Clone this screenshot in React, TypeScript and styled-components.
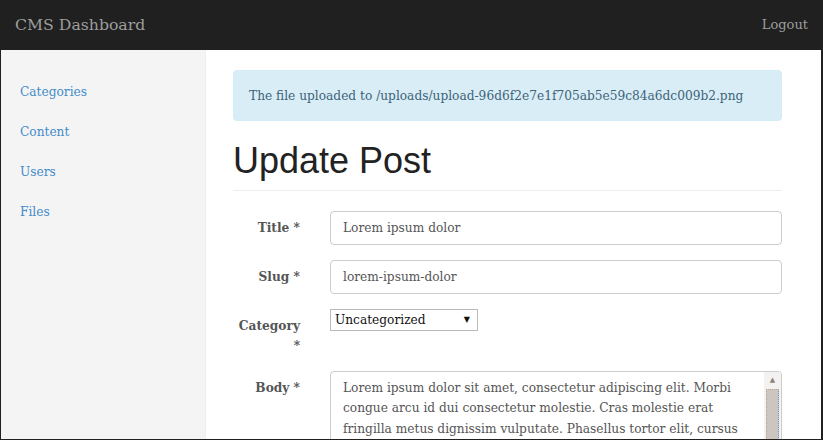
import styled, { createGlobalStyle } from 'styled-components';

const serif = `"DejaVu Serif", Georgia, serif`;

const GlobalStyle = createGlobalStyle`
  html, body {
    margin: 0;
    padding: 0;
    background: #fff;
  }
  * {
    box-sizing: border-box;
  }
`;

const BODY_TEXT =
  'Lorem ipsum dolor sit amet, consectetur adipiscing elit. Morbi\n' +
  'congue arcu id dui consectetur molestie. Cras molestie erat\n' +
  'fringilla metus dignissim vulputate. Phasellus tortor elit, cursus\n' +
  'sed lacinia non, pretium nec nunc. Sed a sem non ante ultrices\n' +
  'posuere. Nullam vitae tortor ac sapien congue tincidunt. Donec\n' +
  'eget metus quis erat fringilla placerat. Curabitur vitae mauris\n' +
  'ut est porta sodales. Vivamus feugiat ante sit amet velit.\n' +
  'Aliquam erat volutpat. Integer non est vitae nunc aliquet.';

const sideLinks = ['Categories', 'Content', 'Users', 'Files'];

function App() {
  return (
    <>
      <GlobalStyle />
      <Frame>
        <Navbar>
          <Brand href="#">CMS Dashboard</Brand>
          <NavLink href="#">Logout</NavLink>
        </Navbar>
        <Layout>
          <Sidebar>
            {sideLinks.map((l) => (
              <SideLink key={l} href="#">
                {l}
              </SideLink>
            ))}
          </Sidebar>
          <Main>
            <Alert>The file uploaded to /uploads/upload-96d6f2e7e1f705ab5e59c84a6dc009b2.png</Alert>
            <PageHeader>Update Post</PageHeader>
            <Form>
              <Label>Title *</Label>
              <Input defaultValue="Lorem ipsum dolor" />
              <Label>Slug *</Label>
              <Input defaultValue="lorem-ipsum-dolor" />
              <Label>Category *</Label>
              <SelectWrap>
                <Select defaultValue="0">
                  <option value="0">Uncategorized</option>
                </Select>
              </SelectWrap>
              <Label>Body *</Label>
              <TextAreaWrap>
                <TextArea defaultValue={BODY_TEXT} />
                <ScrollBar>
                  <ScrollArrow>▲</ScrollArrow>
                  <ScrollThumb />
                </ScrollBar>
              </TextAreaWrap>
            </Form>
          </Main>
        </Layout>
      </Frame>
    </>
  );
}

const Frame = styled.div`
  width: 823px;
  height: 440px;
  overflow: hidden;
  display: flex;
  flex-direction: column;
  border-left: 1px solid #202020;
  border-right: 2px solid #202020;
  border-bottom: 1px solid #202020;
  font-family: ${serif};
  font-size: 12.2px;
  line-height: 20px;
  color: #555;
`;
const Navbar = styled.header`
  height: 50px;
  flex: none;
  margin: 0 -2px 0 -1px;
  background: #202020;
  display: flex;
  align-items: center;
  justify-content: space-between;
  padding: 0 15px 0 15px;
`;
const Brand = styled.a`
  color: #9d9d9d;
  font-size: 15.7px;
  text-decoration: none;
`;
const NavLink = styled(Brand)`
  font-size: 13px;
`;
const Layout = styled.div`
  flex: 1;
  display: flex;
  min-height: 0;
`;
const Sidebar = styled.nav`
  width: 205px;
  flex: none;
  background: #f4f4f4;
  border-right: 1px solid #eee;
  padding: 32px 0 0 19px;
  display: flex;
  flex-direction: column;
  gap: 20px;
`;
const SideLink = styled.a`
  color: #428bca;
  text-decoration: none;
  line-height: 20px;
`;
const Main = styled.main`
  flex: 1;
  min-width: 0;
  padding: 20px 39px 0 27px;
`;
const Alert = styled.div`
  height: 51px;
  padding: 15px;
  border: 1px solid #d3ecf6;
  border-radius: 4px;
  background: #d9edf7;
  color: #3d6478;
  white-space: nowrap;
  margin-bottom: 20px;
`;
const PageHeader = styled.h1`
  margin: 0 0 20px;
  padding-bottom: 9px;
  border-bottom: 1px solid #eee;
  font-family: "Liberation Sans", Arial, sans-serif;
  font-weight: 400;
  font-size: 36px;
  line-height: 39.6px;
  color: #222;
`;
const Form = styled.form`
  display: grid;
  grid-template-columns: 67px 1fr;
  column-gap: 30px;
  row-gap: 15px;
  align-items: start;
`;
const Label = styled.label`
  padding-top: 7px;
  text-align: right;
  font-weight: 700;
  line-height: 20px;
`;
const Input = styled.input`
  width: 100%;
  height: 34px;
  padding: 6px 12px;
  border: 1px solid #ccc;
  border-radius: 4px;
  font-family: ${serif};
  font-size: 12.2px;
  color: #555;
  outline: none;
`;
const SelectWrap = styled.div`
  position: relative;
  width: 148px;
  &::after {
    content: '▼';
    position: absolute;
    right: 8px;
    top: 6px;
    font-family: "DejaVu Sans", sans-serif;
    font-size: 8px;
    line-height: 10px;
    color: #111;
    pointer-events: none;
  }
`;
const Select = styled.select`
  appearance: none;
  display: block;
  width: 148px;
  height: 22px;
  padding: 0 4px;
  font-family: ${serif};
  font-size: 12.2px;
  color: #111;
  border: 1px solid #bbb;
  border-radius: 0;
  background: #fff;
`;
const TextAreaWrap = styled.div`
  position: relative;
  height: 150px;
`;
const TextArea = styled.textarea`
  display: block;
  width: 100%;
  height: 100%;
  padding: 6px 30px 6px 12px;
  border: 1px solid #ccc;
  border-radius: 4px;
  font-family: ${serif};
  font-size: 12.2px;
  line-height: 20.5px;
  color: #555;
  resize: none;
  outline: none;
  white-space: pre;
  overflow: hidden;
`;
const ScrollBar = styled.div`
  position: absolute;
  top: 1px;
  right: 1px;
  bottom: 1px;
  width: 17px;
  background: #f3f2f1;
  border-top-right-radius: 3px;
  display: flex;
  flex-direction: column;
  align-items: center;
`;
const ScrollArrow = styled.div`
  height: 17px;
  width: 100%;
  text-align: center;
  font-family: "DejaVu Sans", sans-serif;
  font-size: 7px;
  line-height: 17px;
  color: #8f8177;
`;
const ScrollThumb = styled.div`
  width: 13px;
  flex: 1;
  background: #cdc6c0;
  border: 1px dotted #b9a592;
  border-right-color: #5d9ad6;
`;

export default App;
